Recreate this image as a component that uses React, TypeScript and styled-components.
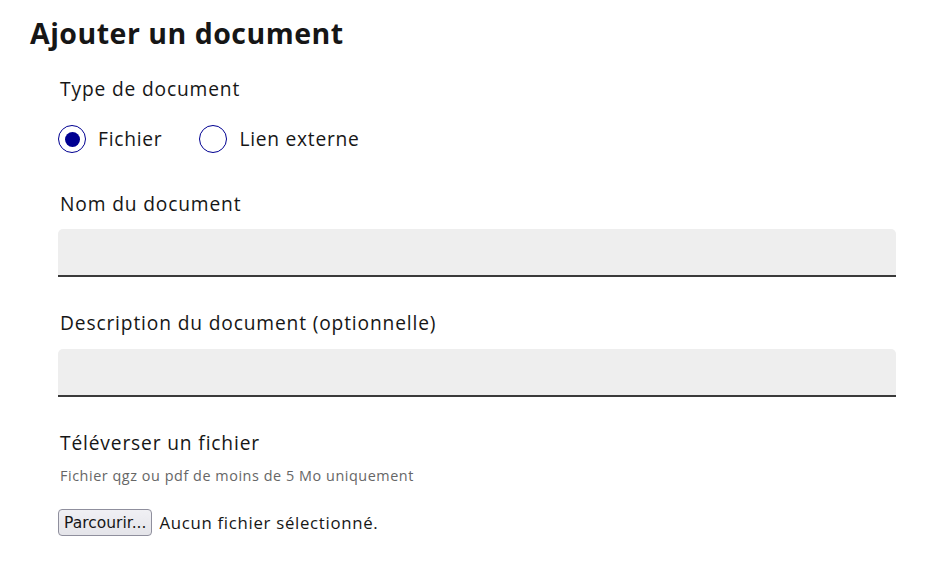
import React from 'react';
import styled, { createGlobalStyle } from 'styled-components';

const GlobalStyle = createGlobalStyle`
  body {
    margin: 0;
    background: #ffffff;
    font-family: "Open Sans", "Noto Sans", sans-serif;
    color: #161616;
  }
`;

const Page = styled.div`
  padding: 13px 30px 0 30px;
  width: 932px;
  height: 570px;
  box-sizing: border-box;
`;

const Title = styled.h1`
  margin: 0;
  font-size: 28.5px;
  line-height: 40px;
  font-weight: 700;
  letter-spacing: 0.5px;
  color: #161616;
`;

const Form = styled.form`
  display: flex;
  flex-direction: column;
  padding-left: 28px;
  width: 838px;
`;

const Fieldset = styled.fieldset`
  border: none;
  margin: 22px 0 0 0;
  padding: 0 0 0 1px;
`;

const Legend = styled.legend`
  padding: 0 0 0 1px;
  font-size: 19.2px;
  line-height: 28px;
  letter-spacing: 0.85px;
  color: #161616;
`;

const RadioRow = styled.div`
  display: flex;
  gap: 37px;
  margin-top: 22px;
  margin-left: -1px;
`;

const RadioLabel = styled.label`
  display: flex;
  align-items: center;
  gap: 12px;
  font-size: 19.2px;
  line-height: 28px;
  letter-spacing: 0.75px;
  color: #161616;
`;

const RadioCircle = styled.span<{ $checked?: boolean }>`
  width: 28px;
  height: 28px;
  border-radius: 50%;
  border: 1.5px solid #000091;
  box-sizing: border-box;
  display: flex;
  align-items: center;
  justify-content: center;

  &::after {
    content: '';
    display: ${p => (p.$checked ? 'block' : 'none')};
    width: 15px;
    height: 15px;
    border-radius: 50%;
    background: #000091;
  }
`;

const Group = styled.div<{ $top: number }>`
  display: flex;
  flex-direction: column;
  margin-top: ${p => p.$top}px;
`;

const Label = styled.label`
  padding-left: 2px;
  font-size: 19.2px;
  line-height: 28px;
  letter-spacing: 0.85px;
  color: #161616;
`;

const Hint = styled.span`
  padding-left: 2px;
  font-size: 14.4px;
  line-height: 20px;
  letter-spacing: 0.55px;
  color: #666666;
  margin-top: 9px;
`;

const TextInput = styled.div<{ $gap: number }>`
  margin-top: ${p => p.$gap}px;
  height: 48px;
  box-sizing: border-box;
  background: #eeeeee;
  border-radius: 5px 5px 0 0;
  border-bottom: 2.5px solid #3a3a3a;
`;

const FileRow = styled.div`
  display: flex;
  align-items: center;
  gap: 7px;
  margin-top: 23px;
`;

const BrowseButton = styled.button`
  height: 27px;
  padding: 0 5px;
  border: 1px solid #8f8f9d;
  border-radius: 4px;
  background: linear-gradient(#f0f0f4, #e4e4e9);
  font-family: "DejaVu Sans", sans-serif;
  font-size: 15.5px;
  color: #161616;
`;

const FileStatus = styled.span`
  font-size: 16.8px;
  letter-spacing: 0.7px;
  color: #161616;
`;

export default function App() {
  return (
    <>
      <GlobalStyle />
      <Page>
        <Title>Ajouter un document</Title>
        <Form>
          <Fieldset>
            <Legend>Type de document</Legend>
            <RadioRow>
              <RadioLabel>
                <RadioCircle $checked />
                Fichier
              </RadioLabel>
              <RadioLabel>
                <RadioCircle />
                Lien externe
              </RadioLabel>
            </RadioRow>
          </Fieldset>
          <Group $top={37}>
            <Label>Nom du document</Label>
            <TextInput $gap={11} />
          </Group>
          <Group $top={32}>
            <Label>Description du document (optionnelle)</Label>
            <TextInput $gap={12} />
          </Group>
          <Group $top={32}>
            <Label>Téléverser un fichier</Label>
            <Hint>Fichier qgz ou pdf de moins de 5 Mo uniquement</Hint>
            <FileRow>
              <BrowseButton type="button">Parcourir...</BrowseButton>
              <FileStatus>Aucun fichier sélectionné.</FileStatus>
            </FileRow>
          </Group>
        </Form>
      </Page>
    </>
  );
}
